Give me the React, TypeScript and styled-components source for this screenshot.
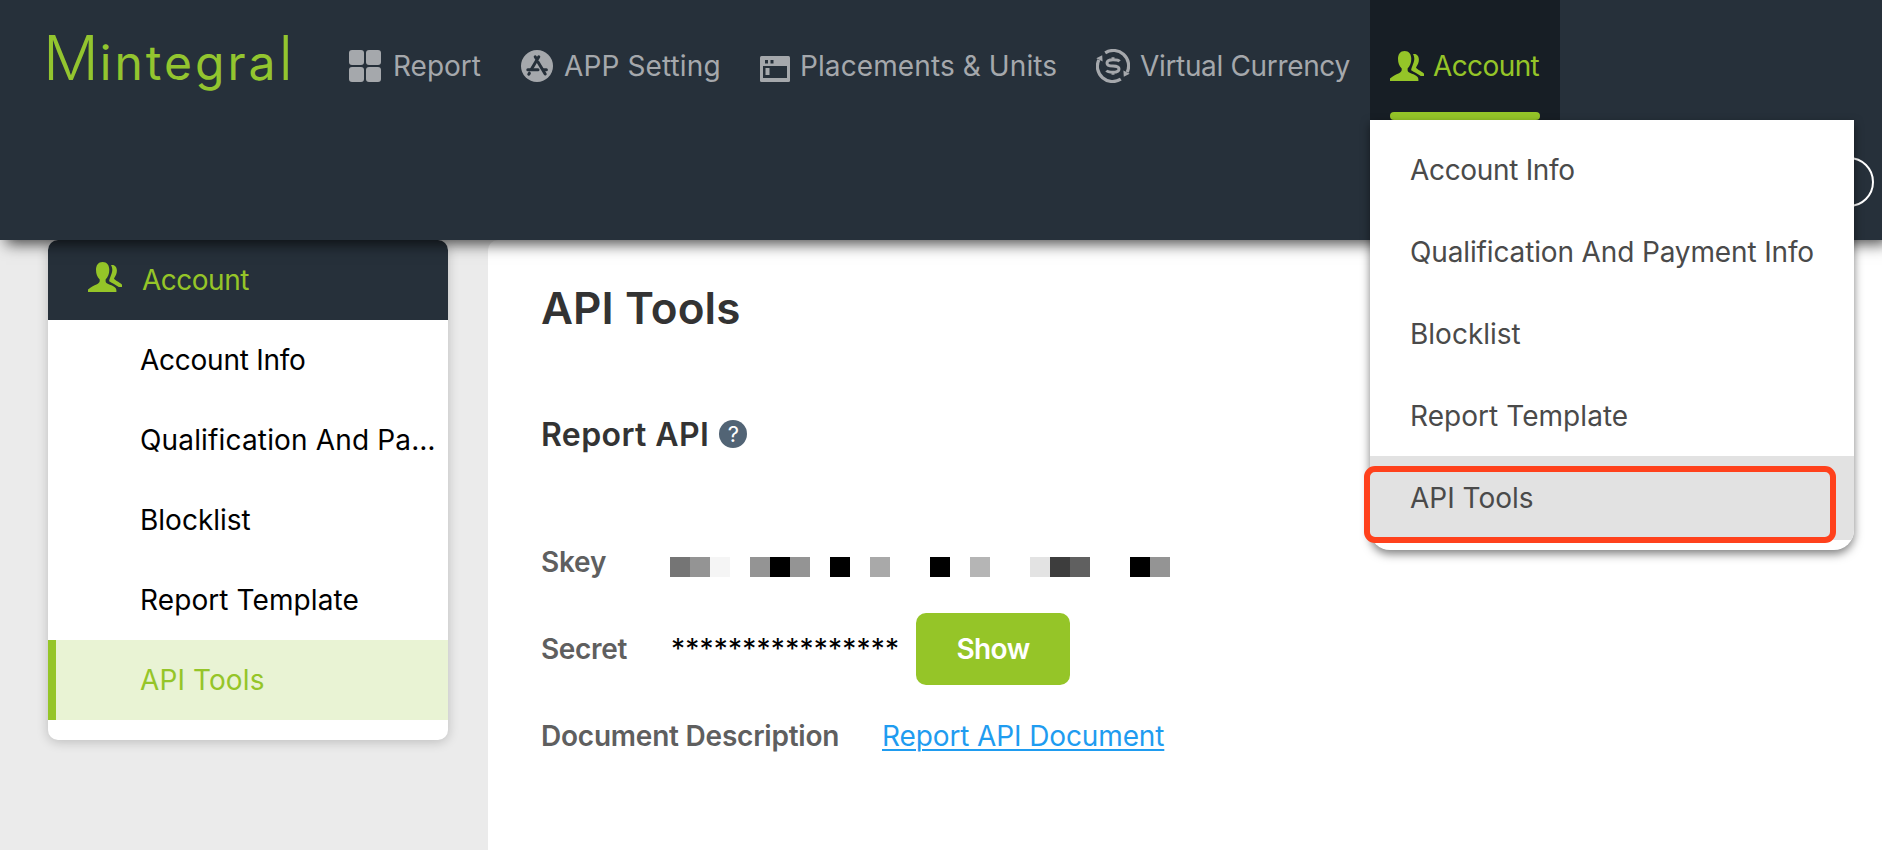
import React from "react";
import styled, { createGlobalStyle, css } from "styled-components";

const green = "#95c528";
const navy = "#26303a";
const navGray = "#a5a8ac";

const GlobalStyle = createGlobalStyle`
  * { box-sizing: border-box; }
  body {
    margin: 0;
    background: #ebebeb;
    font-family: Inter, "Liberation Sans", sans-serif;
    font-size: 28px;
    overflow: hidden;
  }
  ul { list-style: none; margin: 0; padding: 0; }
  h1, h2 { margin: 0; }
`;

const Page = styled.div`
  display: flex;
  flex-direction: column;
  height: 850px;
  overflow: hidden;
`;

const Header = styled.header`
  position: relative;
  z-index: 2;
  flex: none;
  height: 240px;
  background: ${navy};
  box-shadow: 6px 4px 14px rgba(0, 0, 0, 0.7);
`;

const TopBar = styled.div`
  display: flex;
  height: 120px;
`;

const Logo = styled.div`
  display: flex;
  align-items: baseline;
  width: 328px;
  padding: 12px 0 0 43px;
  color: #93c52f;
  line-height: 92px;
  white-space: nowrap;
`;

const LogoTall = styled.span`
  font-size: 62px;
  font-weight: 300;
  letter-spacing: 1px;
`;

const LogoSmall = styled.span`
  font-size: 48px;
  font-weight: 400;
  letter-spacing: 3px;
`;

const Nav = styled.nav`
  display: flex;
`;

const NavItem = styled.a<{ $width: number; $track?: number; $active?: boolean }>`
  position: relative;
  display: flex;
  align-items: center;
  width: ${(p) => p.$width}px;
  padding: 12px 20px 0;
  color: ${navGray};
  letter-spacing: ${(p) => p.$track ?? 0}px;
  white-space: nowrap;
  ${(p) =>
    p.$active &&
    css`
      color: ${green};
      background: #171e25;
      &::after {
        content: "";
        position: absolute;
        left: 20px;
        right: 20px;
        bottom: 0;
        height: 8px;
        border-radius: 4px;
        background: ${green};
      }
    `}
`;

const IconSlot = styled.span<{ $width: number; $drop?: number }>`
  display: flex;
  flex: none;
  width: ${(p) => p.$width}px;
  padding-top: ${(p) => p.$drop ?? 0}px;
  svg { display: block; }
`;

const Avatar = styled.div`
  position: absolute;
  right: 8px;
  top: 157px;
  width: 50px;
  height: 50px;
  border: 2px solid #fff;
  border-radius: 50%;
`;

const Dropdown = styled.ul`
  position: absolute;
  z-index: 3;
  top: 120px;
  left: 1370px;
  width: 484px;
  padding: 8px 0 10px;
  overflow: hidden;
  border-radius: 0 0 20px 20px;
  background: #fff;
  box-shadow: 0 4px 10px rgba(0, 0, 0, 0.5);
`;

const DropdownItem = styled.li<{ $active?: boolean; $track?: number }>`
  height: ${(p) => (p.$active ? 84 : 82)}px;
  padding-left: 40px;
  line-height: 84px;
  color: #4a4a4a;
  background: ${(p) => (p.$active ? "#e2e2e2" : "transparent")};
  letter-spacing: ${(p) => p.$track ?? 0}px;
  white-space: nowrap;
`;

const Highlight = styled.div`
  position: absolute;
  z-index: 4;
  top: 466px;
  left: 1364px;
  width: 472px;
  height: 77px;
  border: 6px solid #ff411c;
  border-radius: 11px;
`;

const Body = styled.div`
  display: flex;
  flex: 1;
  align-items: flex-start;
  gap: 40px;
  padding-left: 48px;
`;

const Sidebar = styled.aside`
  flex: none;
  width: 400px;
  padding-bottom: 20px;
  overflow: hidden;
  border-radius: 10px;
  background: #fff;
  box-shadow: 0 2px 12px rgba(0, 0, 0, 0.2);
`;

const SidebarTitle = styled.div`
  display: flex;
  align-items: center;
  height: 80px;
  padding-left: 40px;
  color: ${green};
  background: ${navy};
  letter-spacing: -0.5px;
  svg { margin-top: -6px; }
`;

const SidebarItem = styled.li<{ $active?: boolean; $track?: number }>`
  height: 80px;
  padding-left: 84px;
  border-left: 8px solid ${(p) => (p.$active ? green : "transparent")};
  color: ${(p) => (p.$active ? green : "#000")};
  background: ${(p) => (p.$active ? "#e9f3d4" : "#fff")};
  line-height: 80px;
  letter-spacing: ${(p) => p.$track ?? 0}px;
  white-space: nowrap;
`;

const Main = styled.main`
  flex: 1;
  height: 610px;
  padding: 40px 0 0 53px;
  border-top-left-radius: 10px;
  background: #fff;
`;

const Title = styled.h1`
  color: #333;
  font-size: 44px;
  font-weight: 600;
  line-height: 56px;
  letter-spacing: 0.1px;
`;

const SectionTitle = styled.h2`
  display: flex;
  align-items: center;
  gap: 10px;
  height: 40px;
  margin: 78px 0 72px;
  color: #333;
  font-size: 32px;
  font-weight: 600;
  letter-spacing: 0.4px;
`;

const Help = styled.span`
  display: flex;
  align-items: center;
  justify-content: center;
  width: 28px;
  height: 28px;
  border-radius: 50%;
  color: #fff;
  background: #526475;
  font-size: 22px;
  font-weight: 400;
  letter-spacing: 0;
`;

const Fields = styled.div`
  display: flex;
  flex-direction: column;
  gap: 15px;
`;

const Field = styled.div`
  display: flex;
  align-items: center;
  height: 72px;
  white-space: nowrap;
`;

const Label = styled.span<{ $width: number; $track: number }>`
  width: ${(p) => p.$width}px;
  color: #5f5f5f;
  font-weight: 600;
  letter-spacing: ${(p) => p.$track}px;
`;

const Mask = styled.span`
  display: flex;
  margin-top: 10px;
`;

const MaskCell = styled.i<{ $shade: string }>`
  width: 20px;
  height: 20px;
  background: ${(p) => p.$shade};
`;

const Stars = styled.span`
  width: 245px;
  letter-spacing: 0.24px;
`;

const ShowButton = styled.button`
  width: 154px;
  height: 72px;
  padding: 0;
  border: 0;
  border-radius: 10px;
  color: #fff;
  background: ${green};
  font: 600 28px Inter, sans-serif;
  letter-spacing: -0.6px;
`;

const DocLink = styled.a`
  color: #1f9cf0;
  letter-spacing: -0.12px;
  text-decoration: underline;
  text-decoration-thickness: 2px;
  text-underline-offset: 3px;
`;

const GridIcon = () => (
  <svg width="34" height="34" viewBox="0 0 34 34" fill={navGray}>
    <rect x="1" y="1" width="15" height="15" rx="3" />
    <rect x="18" y="1" width="15" height="15" rx="3" />
    <rect x="1" y="18" width="15" height="15" rx="3" />
    <rect x="18" y="18" width="15" height="15" rx="3" />
  </svg>
);

const StoreIcon = () => (
  <svg width="34" height="34" viewBox="0 0 34 34">
    <circle cx="17" cy="17" r="16" fill={navGray} />
    <g stroke={navy} strokeWidth="3" strokeLinecap="round" fill="none">
      <path d="M18.8 7.8 L11.4 20.2 M15.2 7.8 L17 10.8 M18 13 L25.2 25" />
      <path d="M7.8 20.8 H18 M23.4 20.8 H26.4 M9.4 24.2 L8.8 25.2" />
    </g>
  </svg>
);

const WindowIcon = () => (
  <svg width="30" height="26" viewBox="0 0 30 26">
    <rect width="30" height="26" rx="1.5" fill={navGray} />
    <path d="M5 4h3v3.5h-3zM10.5 4h3v3.5h-3zM3 10h24v12H3z" fill={navy} />
    <path d="M5.5 12h4v7h-4z" fill={navGray} />
  </svg>
);

const CoinIcon = () => (
  <svg width="34" height="34" viewBox="0 0 34 34" fill="none" stroke={navGray} strokeWidth="3.2">
    <path d="M9.2 3.8 A15.3 15.3 0 0 1 31.2 23.2" />
    <path d="M24.8 30.2 A15.3 15.3 0 0 1 2.8 10.8" />
    <path d="M0.3 9.2 L6.2 6.2 L6.6 12.6 Z M33.7 24.8 L27.8 27.8 L27.4 21.4 Z" fill={navGray} stroke="none" />
    <path d="M23.5 12.4 C22.5 10.9 20 10.7 17 10.7 C13 10.7 11 11.7 11 13.9 C11 16.3 13.4 16.9 17 16.9 C20.6 16.9 23 17.6 23 20 C23 22.3 21 23.3 17 23.3 C14 23.3 11.5 23 10.5 21.5 M17 8.2 V10.8 M17 23.3 V25.8" strokeWidth="3" />
  </svg>
);

const PeopleIcon = () => (
  <svg width="34" height="32" viewBox="0 0 34 32" fill={green}>
    <path d="M14.6 1 C19 1 21.3 4.3 21.3 8.8 C21.3 13 20 16 17.6 18.6 C17.4 21.3 18 22.2 20.2 23.1 C25 24.8 28.4 26.4 28.4 29.4 V31 H0 V28.6 C2.5 26 5.8 24.7 9 23.2 C11.3 22.1 11.9 21.2 11.7 18.6 C9.2 16 8 13 8 8.8 C8 4.3 10.3 1 14.6 1 Z" />
    <path d="M23 4.2 C26.8 3.4 28.9 6.2 28.9 9.6 C28.9 12.8 27.6 15.2 26 17.4 C26.4 19.2 34 22.2 34 23.8 V26 H30.8 C27.6 23.6 24.4 22.2 21.2 20.2 C21.2 17.6 24 13.4 24.3 9 C24.3 7.2 23.9 5.6 23 4.2 Z" />
  </svg>
);

const maskShades: Record<number, string> = {
  0: "#757575", 1: "#949494", 2: "#f5f5f5", 4: "#949494", 5: "#000", 6: "#949494",
  8: "#000", 10: "#a9a9a9", 13: "#000", 15: "#b5b5b5", 18: "#e3e3e3", 19: "#3d3d3d",
  20: "#606060", 23: "#000", 24: "#949494",
};

export default function App() {
  return (
    <Page>
      <GlobalStyle />
      <Header>
        <TopBar>
          <Logo aria-label="Mintegral">
            <LogoTall>M</LogoTall>
            <LogoSmall>integra</LogoSmall>
            <LogoTall>l</LogoTall>
          </Logo>
          <Nav>
            <NavItem $width={172}>
              <IconSlot $width={45}><GridIcon /></IconSlot>Report
            </NavItem>
            <NavItem $width={240} $track={0.12}>
              <IconSlot $width={44}><StoreIcon /></IconSlot>APP Setting
            </NavItem>
            <NavItem $width={336} $track={0.1}>
              <IconSlot $width={40} $drop={5}><WindowIcon /></IconSlot>Placements &amp; Units
            </NavItem>
            <NavItem $width={294} $track={-0.34}>
              <IconSlot $width={44}><CoinIcon /></IconSlot>Virtual Currency
            </NavItem>
            <NavItem $width={190} $track={-0.6} $active>
              <IconSlot $width={43}><PeopleIcon /></IconSlot>Account
            </NavItem>
          </Nav>
        </TopBar>
        <Avatar />
      </Header>
      <Dropdown>
        <DropdownItem $track={-0.32}>Account Info</DropdownItem>
        <DropdownItem $track={-0.14}>Qualification And Payment Info</DropdownItem>
        <DropdownItem>Blocklist</DropdownItem>
        <DropdownItem $track={0.05}>Report Template</DropdownItem>
        <DropdownItem $active>API Tools</DropdownItem>
      </Dropdown>
      <Highlight />
      <Body>
        <Sidebar>
          <SidebarTitle>
            <IconSlot $width={54}><PeopleIcon /></IconSlot>Account
          </SidebarTitle>
          <ul>
            <SidebarItem $track={-0.25}>Account Info</SidebarItem>
            <SidebarItem $track={0.16}>Qualification And Pa…</SidebarItem>
            <SidebarItem>Blocklist</SidebarItem>
            <SidebarItem $track={0.1}>Report Template</SidebarItem>
            <SidebarItem $active $track={0.1}>API Tools</SidebarItem>
          </ul>
        </Sidebar>
        <Main>
          <Title>API Tools</Title>
          <SectionTitle>Report API<Help>?</Help></SectionTitle>
          <Fields>
            <Field>
              <Label $width={129} $track={-0.2}>Skey</Label>
              <Mask>
                {Array.from({ length: 25 }, (_, i) => (
                  <MaskCell key={i} $shade={maskShades[i] ?? "transparent"} />
                ))}
              </Mask>
            </Field>
            <Field>
              <Label $width={130} $track={-0.35}>Secret</Label>
              <Stars>****************</Stars>
              <ShowButton>Show</ShowButton>
            </Field>
            <Field>
              <Label $width={341} $track={-0.22}>Document Description</Label>
              <DocLink>Report API Document</DocLink>
            </Field>
          </Fields>
        </Main>
      </Body>
    </Page>
  );
}
